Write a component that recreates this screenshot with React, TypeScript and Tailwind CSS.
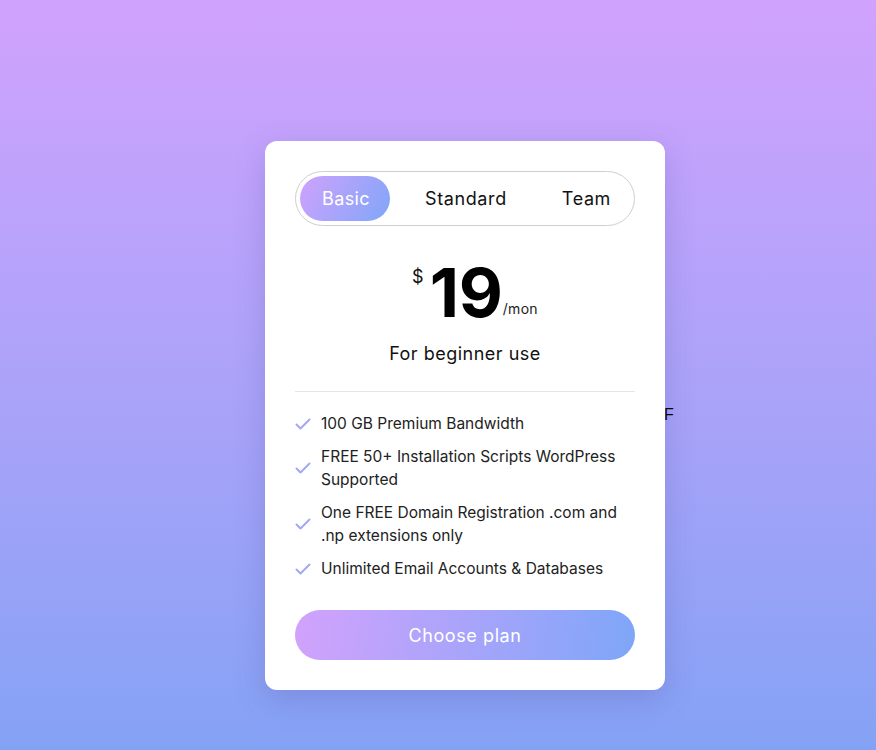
import React from 'react';

const features = [
  '100 GB Premium Bandwidth',
  'FREE 50+ Installation Scripts WordPress Supported',
  'One FREE Domain Registration .com and .np extensions only',
  'Unlimited Email Accounts & Databases',
];

const tabs = ['Basic', 'Standard', 'Team'];

function Check() {
  return (
    <svg width="16" height="12" viewBox="0 0 16 12" fill="none" className="shrink-0">
      <path
        d="M1.5 6.5l4 4L14.5 1.5"
        stroke="#a6a6f6"
        strokeWidth="2"
        strokeLinecap="round"
        strokeLinejoin="round"
      />
    </svg>
  );
}

export default function App() {
  const [active, setActive] = React.useState(0);

  return (
    <div
      className="min-h-[750px] w-full bg-gradient-to-b from-[#d0a2fd] to-[#84a2f5] pl-[265px] pt-[141px]"
      style={{ fontFamily: 'Inter, "Noto Sans", sans-serif' }}
    >
      <div className="relative w-[400px]">
        <span
          className="absolute left-[399px] top-[266px] text-[16px] leading-none text-black"
          style={{ fontFamily: '"Liberation Sans", Arial, sans-serif' }}
        >
          F
        </span>
        <div className="relative flex flex-col rounded-xl bg-white p-[30px] shadow-[0_10px_30px_rgba(80,80,160,0.25)]">
          <div className="flex h-[55px] items-center justify-between rounded-full border border-[#cfcfcf] p-[4px] pr-[3px]">
            {tabs.map((t, i) => (
              <button
                key={t}
                onClick={() => setActive(i)}
                className={
                  i === active
                    ? 'flex h-[45px] w-[90px] items-center justify-center rounded-full bg-linear-[120deg] from-[#cfa2fd] to-[#80a6f8] pl-[2px] text-[18px] tracking-[0.4px] text-white'
                    : 'flex h-[45px] items-center justify-center rounded-full px-[20px] text-[18px] tracking-[0.6px] text-[#111]'
                }
              >
                {t}
              </button>
            ))}
          </div>

          <div className="mt-[34px] flex items-start justify-center pl-[20px]">
            <span className="mt-[8px] text-[18px] leading-none text-[#111]">$</span>
            <span className="ml-[6px] text-[68px] font-bold leading-[64px] tracking-[-0.2px] text-black">
              19
            </span>
            <span className="mt-[38px] text-[14px] tracking-[0.3px] text-[#222]">/mon</span>
          </div>

          <p className="mt-[16px] text-center text-[18px] tracking-[0.5px] text-[#111]">
            For beginner use
          </p>

          <hr className="mt-[24px] border-t border-[#e6e6e6]" />

          <ul className="mt-[20px] flex flex-col gap-[10px]">
            {features.map((f) => (
              <li key={f} className="flex items-center gap-[10px]">
                <Check />
                <span className="pr-[12px] text-[15.5px] leading-[23px] text-[#222]">{f}</span>
              </li>
            ))}
          </ul>

          <button className="mt-[30px] h-[50px] w-full rounded-full bg-linear-[100deg] from-[#d2a2fc] to-[#7ea6f8] text-[18px] tracking-[0.6px] text-white">
            Choose plan
          </button>
        </div>
      </div>
    </div>
  );
}
